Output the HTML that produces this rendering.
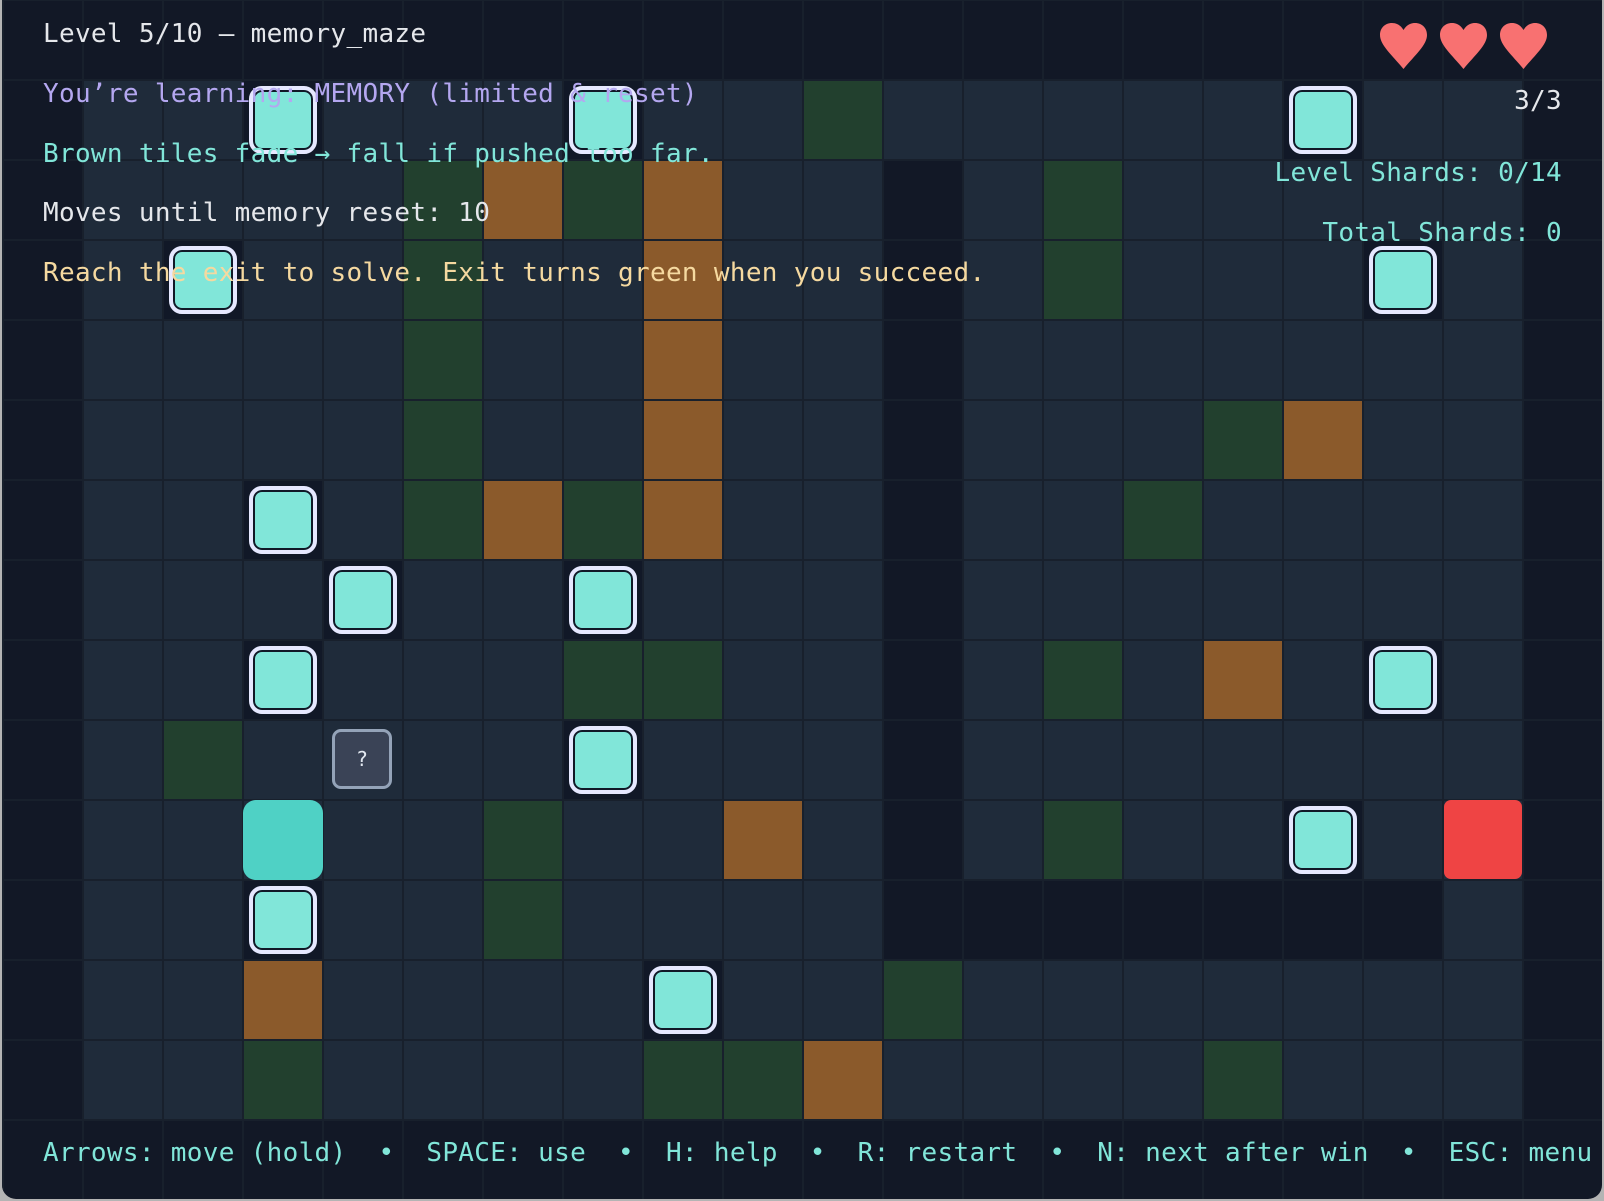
<!DOCTYPE html>
<html><head><meta charset="utf-8">
<style>
html,body{margin:0;padding:0;width:1604px;height:1201px;overflow:hidden;background:#b4b4b4;}
#w{position:absolute;left:2px;top:0;width:1600px;height:1199px;background:#121826;border-radius:0 0 14px 14px;overflow:hidden;}
#floor{position:absolute;left:81px;top:80px;width:1440px;height:1040px;background:#1f2b3a;}
.t{position:absolute;width:80px;height:80px;}
.g{background:#22402e}.b{background:#8b5a2b}.d{background:#121826}
.s{background:#111827}
.s i{position:absolute;left:6px;top:6px;width:60px;height:60px;border:4px solid #e6e8ff;border-radius:13px;background:#81e6d9;box-shadow:inset 0 0 0 2px #111827;}
#lines{position:absolute;left:0;top:0;width:1600px;height:1201px;
background-image:linear-gradient(to right,#18202c 2px,transparent 2px),linear-gradient(to bottom,#18202c 2px,transparent 2px);
background-size:80px 80px;background-position:0px -1px;}
.txt{position:absolute;font-family:"DejaVu Sans Mono","Liberation Mono",monospace;font-size:26px;white-space:pre;line-height:30px;letter-spacing:0.32px;}
.heart{position:absolute;top:23px;width:47px;height:46px;}
</style></head><body>
<div id="w">
<div id="floor"></div>
<!-- row1 -->
<div class="t g" style="left:801px;top:80px"></div>
<div class="t s" style="left:241px;top:80px"><i></i></div>
<div class="t s" style="left:561px;top:80px"><i></i></div>
<div class="t s" style="left:1281px;top:80px"><i></i></div>
<!-- row2 -->
<div class="t g" style="left:401px;top:160px"></div>
<div class="t b" style="left:481px;top:160px"></div>
<div class="t g" style="left:561px;top:160px"></div>
<div class="t b" style="left:641px;top:160px"></div>
<div class="t d" style="left:881px;top:160px"></div>
<div class="t g" style="left:1041px;top:160px"></div>
<!-- row3 -->
<div class="t s" style="left:161px;top:240px"><i></i></div>
<div class="t g" style="left:401px;top:240px"></div>
<div class="t b" style="left:641px;top:240px"></div>
<div class="t d" style="left:881px;top:240px"></div>
<div class="t g" style="left:1041px;top:240px"></div>
<div class="t s" style="left:1361px;top:240px"><i></i></div>
<!-- row4 -->
<div class="t g" style="left:401px;top:320px"></div>
<div class="t b" style="left:641px;top:320px"></div>
<div class="t d" style="left:881px;top:320px"></div>
<!-- row5 -->
<div class="t g" style="left:401px;top:400px"></div>
<div class="t b" style="left:641px;top:400px"></div>
<div class="t d" style="left:881px;top:400px"></div>
<div class="t g" style="left:1201px;top:400px"></div>
<div class="t b" style="left:1281px;top:400px"></div>
<!-- row6 -->
<div class="t s" style="left:241px;top:480px"><i></i></div>
<div class="t g" style="left:401px;top:480px"></div>
<div class="t b" style="left:481px;top:480px"></div>
<div class="t g" style="left:561px;top:480px"></div>
<div class="t b" style="left:641px;top:480px"></div>
<div class="t d" style="left:881px;top:480px"></div>
<div class="t g" style="left:1121px;top:480px"></div>
<!-- row7 -->
<div class="t s" style="left:321px;top:560px"><i></i></div>
<div class="t s" style="left:561px;top:560px"><i></i></div>
<div class="t d" style="left:881px;top:560px"></div>
<!-- row8 -->
<div class="t s" style="left:241px;top:640px"><i></i></div>
<div class="t g" style="left:561px;top:640px"></div>
<div class="t g" style="left:641px;top:640px"></div>
<div class="t d" style="left:881px;top:640px"></div>
<div class="t g" style="left:1041px;top:640px"></div>
<div class="t b" style="left:1201px;top:640px"></div>
<div class="t s" style="left:1361px;top:640px"><i></i></div>
<!-- row9 -->
<div class="t g" style="left:161px;top:720px"></div>
<div class="t s" style="left:561px;top:720px"><i></i></div>
<div class="t d" style="left:881px;top:720px"></div>
<!-- row10 -->
<div class="t g" style="left:481px;top:800px"></div>
<div class="t b" style="left:721px;top:800px"></div>
<div class="t d" style="left:881px;top:800px"></div>
<div class="t g" style="left:1041px;top:800px"></div>
<div class="t s" style="left:1281px;top:800px"><i></i></div>
<!-- row11 -->
<div class="t s" style="left:241px;top:880px"><i></i></div>
<div class="t g" style="left:481px;top:880px"></div>
<div class="t d" style="left:881px;top:880px;width:560px"></div>
<!-- row12 -->
<div class="t b" style="left:241px;top:960px"></div>
<div class="t s" style="left:641px;top:960px"><i></i></div>
<div class="t g" style="left:881px;top:960px"></div>
<!-- row13 -->
<div class="t g" style="left:241px;top:1040px"></div>
<div class="t g" style="left:641px;top:1040px"></div>
<div class="t g" style="left:721px;top:1040px"></div>
<div class="t b" style="left:801px;top:1040px"></div>
<div class="t g" style="left:1201px;top:1040px"></div>

<div id="lines"></div>

<div style="position:absolute;left:241px;top:800px;width:80px;height:80px;background:#4fd1c5;border-radius:13px"></div>
<div style="position:absolute;left:1442px;top:800px;width:78px;height:79px;background:#ef4444;border-radius:7px"></div>
<div style="position:absolute;left:330px;top:729px;width:54px;height:54px;border:3px solid #94a3b8;border-radius:9px;background:#3a4356;color:#e2e8f0;font-family:'DejaVu Sans Mono',monospace;font-size:20px;text-align:center;line-height:54px">?</div>

<svg class="heart" style="left:1378px" viewBox="0 0 47 46"><path d="M23.5 7C20 1 15 0 12 0 5 0 0 5 0 12c0 10 12 20 23.5 34C35 32 47 22 47 12 47 5 42 0 35 0 32 0 27 1 23.5 7z" fill="#f87171"/></svg>
<svg class="heart" style="left:1438px" viewBox="0 0 47 46"><path d="M23.5 7C20 1 15 0 12 0 5 0 0 5 0 12c0 10 12 20 23.5 34C35 32 47 22 47 12 47 5 42 0 35 0 32 0 27 1 23.5 7z" fill="#f87171"/></svg>
<svg class="heart" style="left:1498px" viewBox="0 0 47 46"><path d="M23.5 7C20 1 15 0 12 0 5 0 0 5 0 12c0 10 12 20 23.5 34C35 32 47 22 47 12 47 5 42 0 35 0 32 0 27 1 23.5 7z" fill="#f87171"/></svg>

<div class="txt" style="left:41px;top:19px;color:#e5e7eb">Level 5/10 – memory_maze</div>
<div class="txt" style="left:41px;top:79px;color:#b4a7f0">You’re learning: MEMORY (limited &amp; reset)</div>
<div class="txt" style="left:41px;top:139px;color:#81e6d9">Brown tiles fade → fall if pushed too far.</div>
<div class="txt" style="left:41px;top:198px;color:#e5e7eb">Moves until memory reset: 10</div>
<div class="txt" style="left:41px;top:258px;color:#f5d9a0">Reach the exit to solve. Exit turns green when you succeed.</div>

<div class="txt" style="right:40px;top:86px;color:#e5e7eb;text-align:right">3/3</div>
<div class="txt" style="right:40px;top:158px;color:#81e6d9;text-align:right">Level Shards: 0/14</div>
<div class="txt" style="right:40px;top:218px;color:#81e6d9;text-align:right">Total Shards: 0</div>

<div class="txt" style="left:41px;top:1138px;color:#81e6d9">Arrows: move (hold)  •  SPACE: use  •  H: help  •  R: restart  •  N: next after win  •  ESC: menu</div>
</div>
</body></html>
